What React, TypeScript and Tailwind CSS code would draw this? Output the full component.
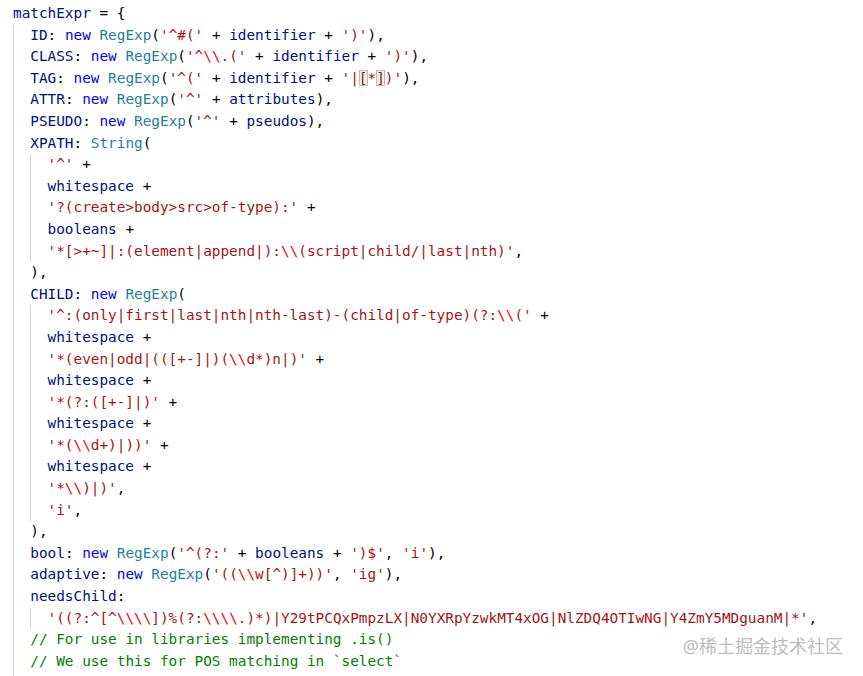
type Tok = [string, string];

const C: Record<string, string> = {
  v: "text-[#001080]",
  k: "text-[#0000ff]",
  c: "text-[#267f99]",
  s: "text-[#a31515]",
  e: "text-[#ee0000]",
  p: "text-[#000000]",
  m: "text-[#008000]",
  b: "text-[#a31515] bg-[#e9f2e6] outline outline-1 outline-[#b8bdb5] -outline-offset-1",
};

// string with \\ escapes split out
function str(t: string): Tok[] {
  const out: Tok[] = [];
  const parts = t.split(/(\\\\)/);
  for (const p of parts) {
    if (!p) continue;
    out.push([p === "\\\\" ? "e" : "s", p]);
  }
  return out;
}

const lines: { indent: number; toks: Tok[] }[] = [
  { indent: 0, toks: [["v", "matchExpr"], ["p", " = {"]] },
  { indent: 1, toks: [["v", "ID"], ["p", ": "], ["k", "new "], ["c", "RegExp"], ["p", "("], ...str("'^#('"), ["p", " + "], ["v", "identifier"], ["p", " + "], ...str("')'"), ["p", "),"]] },
  { indent: 1, toks: [["v", "CLASS"], ["p", ": "], ["k", "new "], ["c", "RegExp"], ["p", "("], ...str("'^\\\\.('"), ["p", " + "], ["v", "identifier"], ["p", " + "], ...str("')'"), ["p", "),"]] },
  { indent: 1, toks: [["v", "TAG"], ["p", ": "], ["k", "new "], ["c", "RegExp"], ["p", "("], ...str("'^('"), ["p", " + "], ["v", "identifier"], ["p", " + "], ["s", "'|"], ["b", "["], ["s", "*"], ["b", "]"], ["s", ")'"], ["p", "),"]] },
  { indent: 1, toks: [["v", "ATTR"], ["p", ": "], ["k", "new "], ["c", "RegExp"], ["p", "("], ...str("'^'"), ["p", " + "], ["v", "attributes"], ["p", "),"]] },
  { indent: 1, toks: [["v", "PSEUDO"], ["p", ": "], ["k", "new "], ["c", "RegExp"], ["p", "("], ...str("'^'"), ["p", " + "], ["v", "pseudos"], ["p", "),"]] },
  { indent: 1, toks: [["v", "XPATH"], ["p", ": "], ["c", "String"], ["p", "("]] },
  { indent: 2, toks: [...str("'^'"), ["p", " +"]] },
  { indent: 2, toks: [["v", "whitespace"], ["p", " +"]] },
  { indent: 2, toks: [...str("'?(create>body>src>of-type):'"), ["p", " +"]] },
  { indent: 2, toks: [["v", "booleans"], ["p", " +"]] },
  { indent: 2, toks: [...str("'*[>+~]|:(element|append|):\\\\(script|child/|last|nth)'"), ["p", ","]] },
  { indent: 1, toks: [["p", "),"]] },
  { indent: 1, toks: [["v", "CHILD"], ["p", ": "], ["k", "new "], ["c", "RegExp"], ["p", "("]] },
  { indent: 2, toks: [...str("'^:(only|first|last|nth|nth-last)-(child|of-type)(?:\\\\('"), ["p", " +"]] },
  { indent: 2, toks: [["v", "whitespace"], ["p", " +"]] },
  { indent: 2, toks: [...str("'*(even|odd|(([+-]|)(\\\\d*)n|)'"), ["p", " +"]] },
  { indent: 2, toks: [["v", "whitespace"], ["p", " +"]] },
  { indent: 2, toks: [...str("'*(?:([+-]|)'"), ["p", " +"]] },
  { indent: 2, toks: [["v", "whitespace"], ["p", " +"]] },
  { indent: 2, toks: [...str("'*(\\\\d+)|))'"), ["p", " +"]] },
  { indent: 2, toks: [["v", "whitespace"], ["p", " +"]] },
  { indent: 2, toks: [...str("'*\\\\)|)'"), ["p", ","]] },
  { indent: 2, toks: [...str("'i'"), ["p", ","]] },
  { indent: 1, toks: [["p", "),"]] },
  { indent: 1, toks: [["v", "bool"], ["p", ": "], ["k", "new "], ["c", "RegExp"], ["p", "("], ...str("'^(?:'"), ["p", " + "], ["v", "booleans"], ["p", " + "], ...str("')$'"), ["p", ", "], ...str("'i'"), ["p", "),"]] },
  { indent: 1, toks: [["v", "adaptive"], ["p", ": "], ["k", "new "], ["c", "RegExp"], ["p", "("], ...str("'((\\\\w[^)]+))'"), ["p", ", "], ...str("'ig'"), ["p", "),"]] },
  { indent: 1, toks: [["v", "needsChild"], ["p", ":"]] },
  { indent: 2, toks: [...str("'((?:^[^\\\\\\\\])%(?:\\\\\\\\.)*)|Y29tPCQxPmpzLX|N0YXRpYzwkMT4xOG|NlZDQ4OTIwNG|Y4ZmY5MDguanM|*'"), ["p", ","]] },
  { indent: 1, toks: [["m", "// For use in libraries implementing .is()"]] },
  { indent: 1, toks: [["m", "// We use this for POS matching in `select`"]] },
  { indent: 1, toks: [] },
];

export default function App() {
  return (
    <div className="relative w-[863px] h-[676px] overflow-hidden bg-white">
      <div
        className="pt-[3px] pl-[13px] text-[14.36px] leading-[21.6px] whitespace-pre"
        style={{ fontFamily: '"DejaVu Sans Mono", "Liberation Mono", monospace' }}
      >
        {lines.map((ln, i) => (
          <div key={i} className="flex h-[21.6px]">
            {Array.from({ length: ln.indent }).map((_, j) => (
              <span key={j} className="inline-block w-[2ch] shrink-0 border-l border-[#d6d6d6]" />
            ))}
            <span>
              {ln.toks.map(([k, t], j) => (
                <span key={j} className={C[k]}>{t}</span>
              ))}
            </span>
          </div>
        ))}
      </div>
      <div
        className="absolute right-[20px] top-[634px] text-[18px] leading-[24px] text-[#bdbdbd]"
        style={{ fontFamily: '"Noto Sans", "Noto Sans CJK SC", sans-serif' }}
      >
        @稀土掘金技术社区
      </div>
    </div>
  );
}
